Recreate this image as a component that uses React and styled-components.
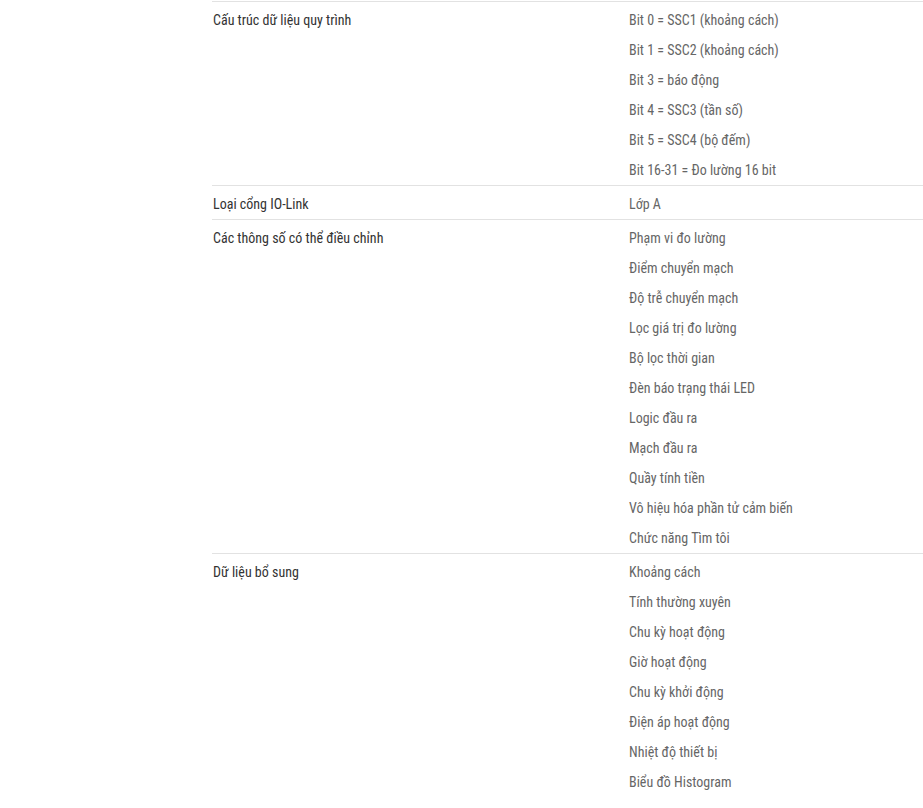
import React from "react";
import styled, { createGlobalStyle } from "styled-components";

const GlobalStyle = createGlobalStyle`
  html, body {
    margin: 0;
    padding: 0;
    background: #fff;
    overflow: hidden;
  }
  body {
    font-family: "Roboto Condensed", "Liberation Sans Narrow", "DejaVu Sans Condensed", Roboto, sans-serif;
    font-size: 14px;
  }
`;

const Page = styled.div`
  padding: 1px 0 0 212px;
`;

const SpecTable = styled.div`
  display: flex;
  flex-direction: column;
`;

const Row = styled.div`
  display: grid;
  grid-template-columns: 417px 1fr;
  border-top: 1px solid #e2e2e2;
  padding: 2px 0 1px;
`;

const Label = styled.div`
  padding: 3px 0 0 1px;
  line-height: 27px;
  color: #333;
`;

const Values = styled.ul`
  list-style: none;
  margin: 0;
  padding: 0;
`;

const Value = styled.li`
  padding-top: 3px;
  line-height: 27px;
  color: #666;
  white-space: nowrap;
`;

const specs = [
  {
    label: "Cấu trúc dữ liệu quy trình",
    values: [
      "Bit 0 = SSC1 (khoảng cách)",
      "Bit 1 = SSC2 (khoảng cách)",
      "Bit 3 = báo động",
      "Bit 4 = SSC3 (tần số)",
      "Bit 5 = SSC4 (bộ đếm)",
      "Bit 16-31 = Đo lường 16 bit",
    ],
  },
  { label: "Loại cổng IO-Link", values: ["Lớp A"] },
  {
    label: "Các thông số có thể điều chỉnh",
    values: [
      "Phạm vi đo lường",
      "Điểm chuyển mạch",
      "Độ trễ chuyển mạch",
      "Lọc giá trị đo lường",
      "Bộ lọc thời gian",
      "Đèn báo trạng thái LED",
      "Logic đầu ra",
      "Mạch đầu ra",
      "Quầy tính tiền",
      "Vô hiệu hóa phần tử cảm biến",
      "Chức năng Tìm tôi",
    ],
  },
  {
    label: "Dữ liệu bổ sung",
    values: [
      "Khoảng cách",
      "Tính thường xuyên",
      "Chu kỳ hoạt động",
      "Giờ hoạt động",
      "Chu kỳ khởi động",
      "Điện áp hoạt động",
      "Nhiệt độ thiết bị",
      "Biểu đồ Histogram",
    ],
  },
];

const App = () => {
  return (
    <>
      <GlobalStyle />
      <Page>
        <SpecTable>
          {specs.map((spec) => (
            <Row key={spec.label}>
              <Label>{spec.label}</Label>
              <Values>
                {spec.values.map((v) => (
                  <Value key={v}>{v}</Value>
                ))}
              </Values>
            </Row>
          ))}
        </SpecTable>
      </Page>
    </>
  );
};

export default App;
